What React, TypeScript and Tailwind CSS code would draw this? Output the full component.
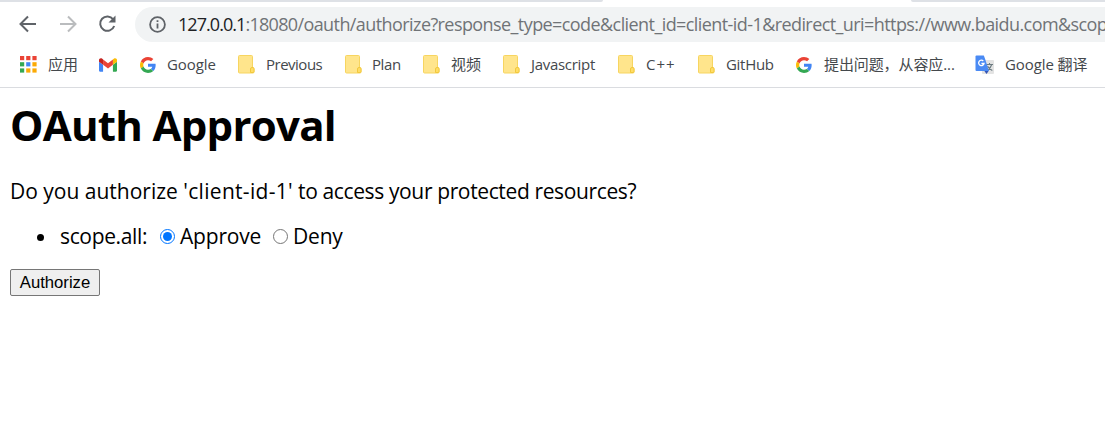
import React from "react";

const uiFont = "font-['Open_Sans','Noto_Sans_CJK_SC',sans-serif]";

function GoogleIcon() {
  return (
    <svg viewBox="0 0 48 48" className="h-4 w-4 shrink-0">
      <path fill="#EA4335" d="M24 9.5c3.54 0 6.71 1.22 9.21 3.6l6.85-6.85C35.9 2.38 30.47 0 24 0 14.62 0 6.51 5.38 2.56 13.22l7.98 6.19C12.43 13.72 17.74 9.5 24 9.5z" />
      <path fill="#4285F4" d="M46.98 24.55c0-1.57-.15-3.09-.38-4.55H24v9.02h12.94c-.58 2.96-2.26 5.48-4.78 7.18l7.73 6c4.51-4.18 7.09-10.36 7.09-17.65z" />
      <path fill="#FBBC05" d="M10.53 28.59c-.48-1.45-.76-2.99-.76-4.59s.27-3.14.76-4.59l-7.98-6.19C.92 16.46 0 20.12 0 24c0 3.88.92 7.54 2.56 10.78l7.97-6.19z" />
      <path fill="#34A853" d="M24 48c6.48 0 11.93-2.13 15.89-5.81l-7.73-6c-2.15 1.45-4.92 2.3-8.16 2.3-6.26 0-11.57-4.22-13.47-9.91l-7.98 6.19C6.51 42.62 14.62 48 24 48z" />
    </svg>
  );
}

function GmailIcon() {
  return (
    <svg viewBox="52 42 88 66" className="h-[14px] w-[18px] shrink-0">
      <path fill="#4285f4" d="M58 108h14V74L52 59v43c0 3.32 2.69 6 6 6" />
      <path fill="#34a853" d="M120 108h14c3.32 0 6-2.69 6-6V59l-20 15" />
      <path fill="#fbbc04" d="M120 48v26l20-15v-8c0-7.42-8.47-11.65-14.4-7.2" />
      <path fill="#ea4335" d="M72 74V48l24 18 24-18v26L96 92" />
      <path fill="#c5221f" d="M52 51v8l20 15V48l-5.600-4.200c-5.940-4.450-14.400-.220-14.400 7.200" />
    </svg>
  );
}

function FolderIcon() {
  return (
    <svg viewBox="0 0 17 19" className="h-[19px] w-[17px] shrink-0">
      <path d="M.5 1.500q0-1 1-1h12q1 0 1 1v11.500h.6q.9 0 .9 1v3q0 1-1 1H1.500q-1 0-1-1z" fill="#FFE58C" stroke="#F7D560" />
      <path d="M12.500 17.500v-3.500q0-1.500 1.500-1.500h1q1 0 1 1.300v2.700q0 1-1 1z" fill="#FFDD66" stroke="#F2C83C" />
    </svg>
  );
}

function AppsIcon() {
  const colors = ["#ea4335", "#ea4335", "#ea4335", "#34a853", "#4285f4", "#fbaa05", "#34a853", "#fbaa05", "#fbaa05"];
  return (
    <svg viewBox="0 0 17 17" className="h-[17px] w-[17px] shrink-0">
      {colors.map((fill, i) => (
        <rect key={i} x={(i % 3) * 6.200} y={Math.floor(i / 3) * 6.200} width="4.200" height="4.200" fill={fill} />
      ))}
    </svg>
  );
}

function TranslateIcon() {
  return (
    <svg viewBox="0 0 20 20" className="h-5 w-5 shrink-0">
      <rect x="7" y="5" width="12" height="14" rx="1" fill="#e3e3e3" />
      <path d="M11 9.500h7M14.500 8v1.500M16.700 9.500q-1 3.500-4.200 6M12.500 11q1.500 3 4.800 4.500" fill="none" stroke="#6b7a80" strokeWidth="1.100" />
      <path d="M9 15.500h5l-2.500 3.500z" fill="#3454b4" />
      <path d="M1.500.500h7.300l1.300 3.500L14 16H1.500q-1 0-1-1v-13.500q0-1 1-1z" fill="#4a8af4" />
      <path d="M8.300 6A2.700 2.700 0 1 0 9 8.500H6.400" fill="none" stroke="#fff" strokeWidth="1.300" />
    </svg>
  );
}

const bookmarks = [
  { icon: <AppsIcon />, text: "应用", cell: "w-[79px]", gap: "w-[28px]", track: "" },
  { icon: <GmailIcon />, text: "", cell: "w-[41px]", gap: "w-[28px]", track: "" },
  { icon: <GoogleIcon />, text: "Google", cell: "w-[98px]", gap: "w-[27px]", track: "tracking-[-0.1px]" },
  { icon: <FolderIcon />, text: "Previous", cell: "w-[107px]", gap: "w-[28px]", track: "tracking-[-0.5px]" },
  { icon: <FolderIcon />, text: "Plan", cell: "w-[78px]", gap: "w-[27px]", track: "tracking-[-0.4px]" },
  { icon: <FolderIcon />, text: "视频", cell: "w-[80px]", gap: "w-[28px]", track: "" },
  { icon: <FolderIcon />, text: "Javascript", cell: "w-[115px]", gap: "w-[28px]", track: "tracking-[-0.3px]" },
  { icon: <FolderIcon />, text: "C++", cell: "w-[80px]", gap: "w-[28px]", track: "tracking-[1px]" },
  { icon: <FolderIcon />, text: "GitHub", cell: "w-[98px]", gap: "w-[28px]", track: "tracking-[-0.3px]" },
  { icon: <GoogleIcon />, text: "提出问题，从容应...", cell: "w-[179px]", gap: "w-[28px]", track: "tracking-[-0.1px]" },
  { icon: <TranslateIcon />, text: "Google 翻译", cell: "w-[120px]", gap: "w-[30px]", track: "tracking-[-0.1px]" },
];

export default function App() {
  return (
    <div className={`h-[433px] w-[1105px] overflow-hidden bg-white text-black ${uiFont}`}>
      <div className="flex h-[2px] justify-between bg-white">
        <div className="w-[603px] rounded-br-[2px] bg-[#dee1e6]" />
        <div className="w-[194px] rounded-bl-[2px] bg-[#dee1e6]" />
      </div>
      <div className="flex h-[45px] items-center pl-[19px]">
        <svg viewBox="0 0 18 18" className="mb-[2px] h-[18px] w-[18px]" fill="none" stroke="#5f6368" strokeWidth="2">
          <path d="M17 9H2M9 1.500L1.500 9L9 16.500" />
        </svg>
        <svg viewBox="0 0 18 18" className="mb-[2px] ml-[22px] h-[18px] w-[18px]" fill="none" stroke="#babcbe" strokeWidth="2">
          <path d="M1 9H16M9 1.500L16.500 9L9 16.500" />
        </svg>
        <svg viewBox="0 0 18 18" className="mb-[1px] ml-[21px] h-[18px] w-[18px]" fill="none" stroke="#5f6368" strokeWidth="2">
          <path d="M15.200 4.300A7.200 7.200 0 1 0 16.200 11" />
          <path d="M17.500 .5V7.500H10.500z" fill="#5f6368" stroke="none" />
        </svg>
        <div className="ml-[19px] flex h-[35px] min-w-0 flex-1 items-center overflow-hidden rounded-l-full bg-[#f1f3f4] pl-[14px]">
          <svg viewBox="0 0 17 17" className="h-[17px] w-[17px] shrink-0" fill="none" stroke="#5f6368" strokeWidth="1.800">
            <circle cx="8.500" cy="8.500" r="7.400" />
            <path d="M8.500 7.500V12.500M8.500 4.300V6.100" />
          </svg>
          <div className="ml-3 whitespace-nowrap text-[18px] tracking-[-0.58px] text-[#707377]">
            <span className="tracking-[-0.95px] text-[#202124]">127.0.0.1</span>
            <span className="tracking-[-0.7px]">:18080</span>
            <span>/oauth/authorize?response_type=code&amp;client_id=client-id-1&amp;redirect_uri=https://www.baidu.com&amp;scop</span>
          </div>
        </div>
      </div>
      <div className="flex h-[41px] items-center overflow-hidden border-b border-[#dadce0] pb-[5px] pl-5 text-[15px] text-[#44484c]">
        {bookmarks.map((b, i) => (
          <div key={i} className={`flex shrink-0 items-center whitespace-nowrap ${b.cell}`}>
            <div className={`flex shrink-0 items-center ${b.gap}`}>{b.icon}</div>
            <span className={`-mt-px ${b.track}`}>{b.text}</span>
          </div>
        ))}
      </div>
      <main className="pl-[10px]">
        <h1 className="flex h-[73px] items-center text-[42px] leading-none font-bold tracking-[-0.72px]">OAuth Approval</h1>
        <p className="h-[60px] text-[21px] leading-[60px] tracking-[-0.37px]">
          <span className="tracking-[0px]">Do you authorize </span>
          <span className="tracking-[0.3px]">'client-id-1'</span> to access your protected resources?
        </p>
        <ul className="flex h-8 items-center pl-[27px] text-[21px]">
          <li className="flex items-center">
            <span className="mr-[16px] h-[7px] w-[7px] rounded-full bg-black" />
            <span className="w-[100px] tracking-[-0.35px]">scope.all:</span>
            <label className="flex w-[113px] items-center tracking-[-0.2px]">
              <span className="mr-[5px] mb-[2px] flex h-[15px] w-[15px] items-center justify-center rounded-full border border-[#0075ff]">
                <span className="h-[9px] w-[9px] rounded-full bg-[#0075ff]" />
              </span>
              Approve
            </label>
            <label className="flex items-center tracking-[-0.2px]">
              <span className="mr-[5px] mb-[2px] h-[15px] w-[15px] rounded-full border border-[#767676]" />
              Deny
            </label>
          </li>
        </ul>
        <button className="mt-4 flex h-[27px] w-[90px] items-center justify-center rounded-[2px] border border-[#767676] bg-[#efefef] pt-px font-['Liberation_Sans',sans-serif] text-[16.7px] leading-none">Authorize</button>
      </main>
    </div>
  );
}
